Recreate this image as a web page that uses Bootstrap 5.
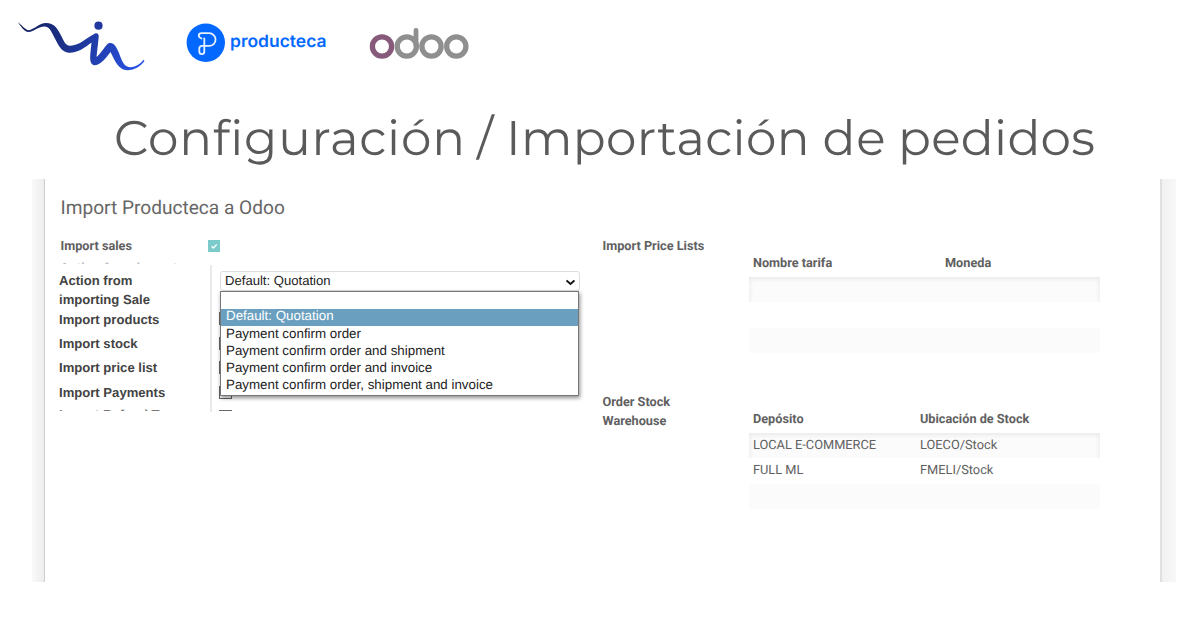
<!DOCTYPE html>
<html lang="es">
<head>
<meta charset="utf-8">
<meta name="viewport" content="width=device-width, initial-scale=1">
<title>Configuración / Importación de pedidos</title>
<link href="https://cdn.jsdelivr.net/npm/bootstrap@5.3.0/dist/css/bootstrap.min.css" rel="stylesheet">
<style>
body{background:#fff;color:#606060;font:12.8px/19px Roboto,sans-serif;width:1191px;height:644px;overflow:hidden;text-rendering:geometricPrecision}
svg{display:block;flex:none}
.brands{height:90px}
.headline{height:89px}
.sheet-wrap{margin-left:32px;width:1144px;height:403px}
.gutter-l{width:12px;background:linear-gradient(90deg,#f9f9f9,#ededee)}
.gutter-r{width:14px;background:linear-gradient(90deg,#f1f1f2,#f8f8f8)}
.sheet{border-left:1px solid #c9ced3;border-right:2px solid #dfe0e2;background:#fff}
.section-title{font-size:19.1px;line-height:24px;font-weight:400;margin:17px 0 0 15.5px;height:23px;color:#666}
.left-half{width:541px;padding:17px 0 0 14px}
.right-half{padding:18px 0 0 16.5px}
.fw-label{font-weight:700;color:#606060;font-size:12.7px}
.tick{width:12px;height:12px;background:#7bcbcb}
.strip{height:2px;overflow:hidden;font:bold 13px/13px "Liberation Sans",sans-serif}
.form-labels{width:151px;font:bold 13.1px/19.5px "Liberation Sans",Arial,sans-serif;color:#434343}
.form-labels .r24{line-height:24.5px;height:24.5px}
.divider{width:2px;height:147px;background:#eaeaea;margin-top:-1px}
.picker{width:360px;margin-left:8px;font:13.35px/17px "Liberation Sans",Arial,sans-serif;color:#222}
.picker-face{height:20px;border:1px solid #ddd;border-radius:3px;padding:0 4px 0 4px;background:#fff;font-size:13.1px}
.options{left:0;top:20px;width:359px;height:105px;border:1px solid #777;background:#fff;box-shadow:1px 2px 4px rgba(0,0,0,.45);z-index:2}
.options div{height:17.1px;padding-left:5px;white-space:nowrap;line-height:15px}
.options .chosen{background:#6a9fbf;color:#fff;line-height:14px}
.chk{left:-1px;width:13px;height:13px;border:1px solid #666;background:#fff}
.list-grid{width:351px}
.list-grid .hd{height:23px;font-weight:700;color:#606060;font-size:12.7px}
.list-grid .line{height:25.3px;line-height:25px}
.list-grid .line:nth-child(even){background:#fbfbfb}
.list-grid .line:nth-child(2){box-shadow:inset 0 6px 5px -4px #e9e9e9,inset 5px 0 5px -5px #e6e6e6,inset -5px 0 5px -5px #e6e6e6}
.list-grid span{padding-left:4px}
</style>
<script src="https://cdn.jsdelivr.net/npm/bootstrap@5.3.0/dist/js/bootstrap.bundle.min.js"></script>
</head>
<body>
<header class="brands">
<svg width="500" height="90" role="img" aria-label="vin, producteca, odoo">
<defs><linearGradient id="ink" gradientUnits="userSpaceOnUse" x1="18" y1="20" x2="144" y2="70"><stop offset="0" stop-color="#14205a"/><stop offset=".35" stop-color="#1b2f84"/><stop offset="1" stop-color="#2a55ea"/></linearGradient></defs>
<path fill="url(#ink)" d="M17.500 22 C22 25 25 30 29 30.300 C35 29 39 23.200 46 23.100 C54 23 57 28 60.500 34.500 C64 41 65 45.500 70 45.700 C79 46 87 37.500 95 33.500 C98 32.800 99 35 98.700 37 L96.500 57 C102 53 105 45 109 43.100 C114 42 116.500 47 119 53 C122 61 124 67 130 67.200 C136 67.200 141 63.500 143.300 59.800 L144.500 61 C141 66 135 70.200 127.500 70.200 C118 69.700 115 61 110.500 52 C106 58 101 65.200 94 65.200 C89.500 64 90 58 90.500 52 L91.500 42.500 C85 47.500 78 53 69 52.700 C61 52.200 58 44 54 36.700 C50.500 29.700 49 26.500 44.500 26.400 C39 26.200 35 30.700 29 31.900 C24 32.200 21 26 17.500 22Z"/>
<circle cx="98.500" cy="25.700" r="4.100" fill="#2038a0"/>
<circle cx="205.800" cy="42.700" r="19.200" fill="#0368ff"/>
<path d="M201.500 38.500 Q198.800 37.500 198.800 35.600 Q198.800 33.200 201.500 33.200 H209.200 A6.300 6.300 0 0 1 209.200 45.900 H202 Q199.300 45.900 199.300 48.600 V51.500 Q199.300 54.200 201.800 54.200 Q204.300 54.200 204.300 51.500 V38.500" fill="none" stroke="#e9f2ff" stroke-width="1.800" stroke-linejoin="round" stroke-linecap="round"/>
<text x="230" y="47.300" textLength="96.500" lengthAdjust="spacingAndGlyphs" font-family="Inter,sans-serif" font-weight="600" font-size="17" fill="#0368ff">producteca</text>
<g fill="none" stroke="#8f8f8f" stroke-width="5.300"><circle cx="382" cy="46.500" r="9.600" stroke="#875a7b"/><circle cx="406.800" cy="46.500" r="9.600"/><path d="M416 46V30.500" stroke-width="4.800" stroke-linecap="round"/><circle cx="431.500" cy="46.500" r="9.600"/><circle cx="456.300" cy="46.500" r="9.600"/></g>
</svg>
</header>
<h1 class="headline m-0">
<svg width="1191" height="89" font-family="Montserrat,Inter,sans-serif" font-weight="400" font-size="48.500" fill="#5a5a5a" style="font-variant-ligatures:none"><text y="64.700"><tspan x="114" textLength="351" lengthAdjust="spacing">Configuración</tspan> <tspan x="477">/</tspan> <tspan x="506" textLength="303.500" lengthAdjust="spacing">Importación</tspan> <tspan x="822.500" textLength="63" lengthAdjust="spacing">de</tspan> <tspan x="898" textLength="197" lengthAdjust="spacing">pedidos</tspan></text></svg>
</h1>
<main class="sheet-wrap d-flex">
<div class="gutter-l"></div>
<div class="sheet flex-grow-1">
<h2 class="section-title">Import Producteca a Odoo</h2>
<div class="d-flex">
<section class="left-half">
<div class="d-flex align-items-center" style="height:19px"><div class="fw-label" style="width:148.500px;padding:2px 0 0 1.500px">Import sales</div><div class="tick"><svg width="12" height="12"><path d="M3.500 6.200 5.300 8 8.700 4.500" stroke="#fff" stroke-width="1.300" fill="none"/></svg></div></div>
<div class="strip" style="margin-top:7px;margin-bottom:2px;color:#bbb;padding-left:1px"><div style="margin-top:-1px">Action from import</div></div>
<div class="d-flex" style="height:147px">
<div class="form-labels"><div style="padding-top:5px;line-height:19.300px">Action from<br>importing Sale<br>Import products</div><div class="r24" style="margin-top:3px">Import stock</div><div class="r24">Import price list</div><div class="r24">Import Payments</div><div class="strip" style="margin-top:4px;color:#777"><div style="margin-top:-1px">Import Refund Typ</div></div></div>
<div class="divider"></div>
<div class="picker position-relative" style="margin-top:5px">
<div class="picker-face d-flex justify-content-between"><span>Default: Quotation</span><svg width="9" height="18"><path d="M.5 8.500 4.500 12 8.500 8.500" fill="none" stroke="#111" stroke-width="1.900"/></svg></div>
<i class="chk position-absolute" style="top:41px"></i><i class="chk position-absolute" style="top:66px"></i><i class="chk position-absolute" style="top:90px"></i><i class="chk position-absolute" style="top:115px"></i><i class="chk position-absolute" style="top:139px;height:1px;border-bottom:0"></i>
<div class="options position-absolute"><div></div><div class="chosen">Default: Quotation</div><div>Payment confirm order</div><div>Payment confirm order and shipment</div><div>Payment confirm order and invoice</div><div>Payment confirm order, shipment and invoice</div></div>
</div>
</div>
</section>
<section class="right-half">
<div class="d-flex" style="height:156px"><div class="fw-label" style="width:146.500px">Import Price Lists</div>
<div class="list-grid" style="padding-top:17px"><div class="hd d-flex"><span style="width:192px">Nombre tarifa</span><span>Moneda</span></div><div class="line"></div><div class="line"></div><div class="line"></div></div></div>
<div class="d-flex"><div class="fw-label" style="width:146.500px">Order Stock<br>Warehouse</div>
<div class="list-grid" style="padding-top:17px"><div class="hd d-flex"><span style="width:167px">Depósito</span><span>Ubicación de Stock</span></div><div class="line d-flex"><span style="width:167px">LOCAL E-COMMERCE</span><span>LOECO/Stock</span></div><div class="line d-flex"><span style="width:167px">FULL ML</span><span>FMELI/Stock</span></div><div class="line"></div></div></div>
</section>
</div>
</div>
<div class="gutter-r"></div>
</main>
</body>
</html>
